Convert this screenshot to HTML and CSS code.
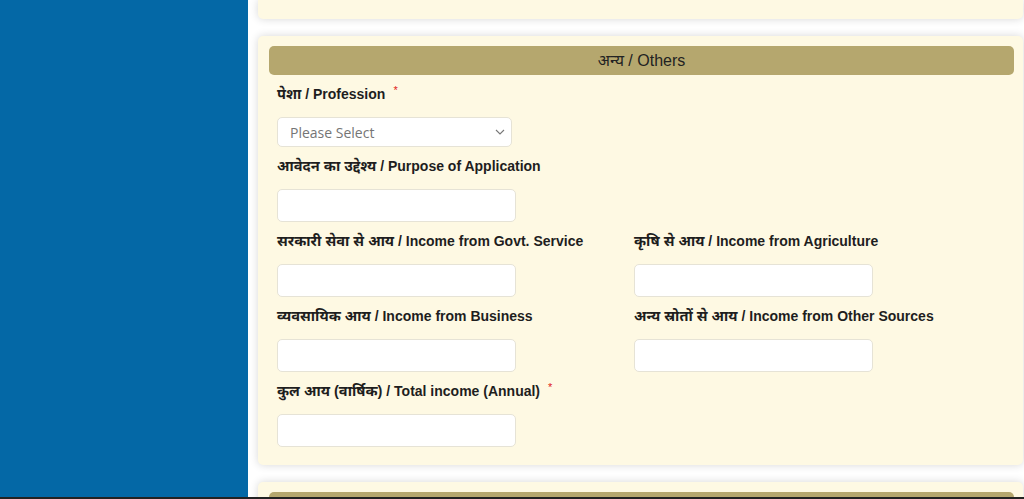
FILE: index.html
```html
<!DOCTYPE html>
<html lang="hi">
<head>
<meta charset="utf-8">
<title>अन्य / Others</title>
<link rel="stylesheet" href="styles.css">
</head>
<body>
<div class="frame">
  <aside class="sidebar"></aside>
  <main class="main">
    <section class="card card-cut"></section>
    <section class="card">
      <div class="card-head">अन्य / Others</div>
      <div class="form-grid">
        <div class="field full">
          <label class="lbl"><span class="dev">पेशा</span> / Profession<span class="req">*</span></label>
          <div class="select">
            <span class="placeholder">Please Select</span>
            <svg class="chev" width="10" height="6" viewBox="0 0 10 6"><path d="M1 1l4 4 4-4" fill="none" stroke="#777" stroke-width="1.1"/></svg>
          </div>
        </div>
        <div class="field full">
          <label class="lbl"><span class="dev">आवेदन का उद्देश्य</span> / Purpose of Application</label>
          <div class="input"></div>
        </div>
        <div class="field">
          <label class="lbl"><span class="dev">सरकारी सेवा से आय</span> / Income from Govt. Service</label>
          <div class="input"></div>
        </div>
        <div class="field">
          <label class="lbl"><span class="dev">कृषि से आय</span> / Income from Agriculture</label>
          <div class="input"></div>
        </div>
        <div class="field">
          <label class="lbl"><span class="dev">व्यवसायिक आय</span> / Income from Business</label>
          <div class="input"></div>
        </div>
        <div class="field">
          <label class="lbl"><span class="dev">अन्य स्रोतों से आय</span> / Income from Other Sources</label>
          <div class="input"></div>
        </div>
        <div class="field full">
          <label class="lbl"><span class="dev">कुल आय (वार्षिक)</span> / Total income (Annual)<span class="req">*</span></label>
          <div class="input"></div>
        </div>
      </div>
    </section>
    <section class="card card-last">
      <div class="card-head">घोषणा / Declaration</div>
    </section>
  </main>
</div>
</body>
</html>
```
FILE: styles.css
```css
html, body {
  margin: 0;
  padding: 0;
  background: #222;
}
body {
  font-family: "Liberation Sans", Arial, "Noto Sans", sans-serif;
  color: #222;
}
.frame {
  display: flex;
  height: 497px;
  overflow: hidden;
  background: #fff;
}
.sidebar {
  width: 248px;
  flex: 0 0 248px;
  background: #0468a6;
}
.main {
  flex: 1;
  padding: 0 1px 0 10px;
  display: flex;
  flex-direction: column;
  gap: 17px;
}
.card {
  background: #fef9e3;
  border-radius: 5px;
  box-shadow: 0 0 8px rgba(0, 0, 0, 0.16);
  padding: 10px 9px 18px 11px;
  flex: 0 0 auto;
}
.card-cut {
  height: 19px;
  padding: 0;
  border-radius: 0 0 5px 5px;
}
.card-head {
  background: #b5a76e;
  border-radius: 5px;
  height: 29px;
  line-height: 29px;
  text-align: center;
  font-size: 16px;
  color: #222;
}
.card-last .card-head {
  line-height: 36px;
}
.form-grid {
  display: grid;
  grid-template-columns: 357px 357px;
  padding: 9px 0 0 8px;
}
.field {
  display: flex;
  flex-direction: column;
  align-items: flex-start;
  margin-bottom: 9px;
}
.field.full {
  grid-column: 1 / 3;
}
.field:last-child {
  margin-bottom: 0;
}
.lbl {
  font-weight: bold;
  font-size: 14px;
  line-height: 20px;
  height: 20px;
  margin-bottom: 13px;
  color: #1e1e1e;
  white-space: nowrap;
}
.dev {
  font-size: 14.6px;
  line-height: 0;
}
.req {
  color: #e02020;
  font-size: 11px;
  line-height: 0;
  vertical-align: 5px;
  margin-left: 8px;
  font-weight: normal;
}
.select {
  width: 235px;
  height: 30px;
  box-sizing: border-box;
  background: #fff;
  border: 1px solid #e6e3d6;
  border-radius: 5px;
  display: flex;
  align-items: center;
  justify-content: space-between;
  padding: 0 6px 0 12px;
}
.placeholder {
  font-family: "Open Sans", "Noto Sans", sans-serif;
  font-size: 14px;
  color: #757575;
}
.chev {
  display: block;
}
.input {
  width: 239px;
  height: 33px;
  box-sizing: border-box;
  background: #fff;
  border: 1px solid #e6e3d6;
  border-radius: 5px;
}
```
